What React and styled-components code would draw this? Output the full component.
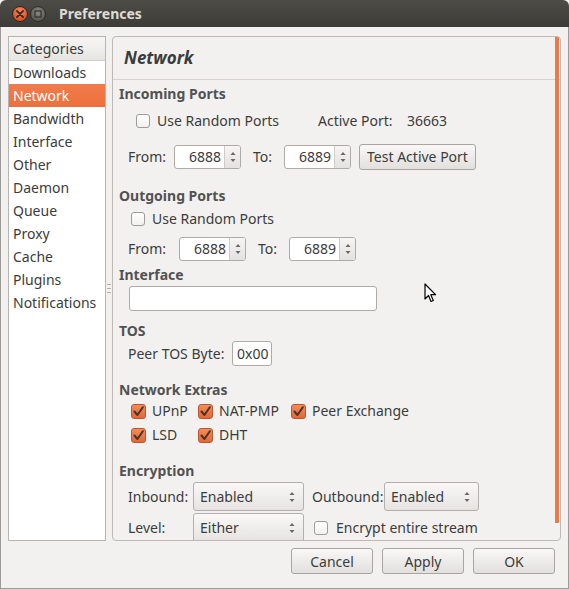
import React from 'react';
import styled, { createGlobalStyle } from 'styled-components';

const Global = createGlobalStyle`
  html, body { margin: 0; padding: 0; background: #f2f1f0; }
  body {
    font-family: "Noto Sans", "DejaVu Sans", sans-serif;
    font-size: 14px;
    color: #3c3c3c;
  }
  * { box-sizing: border-box; }
`;

const Window = styled.div`
  position: relative;
  width: 569px;
  height: 589px;
  display: flex;
  flex-direction: column;
  background: #f2f1f0;
  overflow: hidden;
`;

const TitleBar = styled.div`
  height: 27px;
  flex: none;
  display: flex;
  align-items: center;
  padding-left: 12px;
  background: linear-gradient(#4d4c47, #3c3b37);
  border-radius: 6px 6px 0 0;
`;

const WinButton = styled.span`
  width: 16px;
  height: 16px;
  border-radius: 50%;
  margin-right: ${p => p.$mr}px;
  display: flex;
  align-items: center;
  justify-content: center;
  border: 1px solid #2d2c29;
  background: ${p => (p.$close
    ? 'radial-gradient(circle at 50% 35%, #f8916a, #e3501e 70%)'
    : 'radial-gradient(circle at 50% 35%, #8d8b86, #5e5c57 70%)')};
`;

const Title = styled.span`
  font-weight: bold;
  font-size: 14px;
  color: #dfdbd2;
  line-height: 27px;
`;

const Frame = styled.div`
  flex: 1;
  display: flex;
  flex-direction: column;
  border: 1px solid #9d9b97;
  border-top: none;
`;

const Main = styled.div`
  display: flex;
  padding: 9px 7px 0 7px;
`;

const Sidebar = styled.div`
  width: 98px;
  height: 505px;
  flex: none;
  background: #ffffff;
  border: 1px solid #b7b4af;
  display: flex;
  flex-direction: column;
`;

const SideHeader = styled.div`
  height: 24px;
  line-height: 23px;
  padding-left: 4px;
  background: linear-gradient(#f7f6f5, #e7e5e2);
  border-bottom: 1px solid #d3d0cb;
  color: #3c3c3c;
`;

const SideItem = styled.div`
  height: 23px;
  line-height: 23px;
  padding-left: 4px;
  color: ${p => (p.$active ? '#ffffff' : '#3c3c3c')};
  background: ${p => (p.$active ? 'linear-gradient(#f27b4b, #ec703e)' : 'transparent')};
`;

const Handle = styled.div`
  width: 6px;
  flex: none;
  display: flex;
  align-items: center;
  justify-content: center;
`;

const Grip = styled.div`
  width: 4px;
  height: 9px;
  background: repeating-linear-gradient(to bottom, #b3b0ab 0 1px, transparent 1px 4px);
`;

const Panel = styled.div`
  position: relative;
  width: 449px;
  height: 505px;
  flex: none;
  border: 1px solid #bdbab5;
  border-radius: 4px;
  overflow: hidden;
  display: flex;
  flex-direction: column;
`;

const PanelHeader = styled.div`
  height: 43px;
  flex: none;
  display: flex;
  align-items: center;
  padding-left: 11px;
  padding-bottom: 1px;
  border-bottom: 1px solid #d6d3ce;
  font-size: 17px;
  font-weight: bold;
  font-style: italic;
  color: #3c3c3c;
`;

const Content = styled.div`
  flex: 1;
  overflow: hidden;
  padding-left: 6px;
  display: flex;
  flex-direction: column;
  line-height: 20px;
`;

const Heading = styled.div`
  height: 20px;
  line-height: 22px;
  flex: none;
  margin-top: ${p => p.$mt}px;
  font-weight: bold;
  color: #525252;
`;

const Row = styled.div`
  display: flex;
  align-items: center;
  flex: none;
  height: ${p => p.$h}px;
  margin-top: ${p => p.$mt}px;
  padding-left: ${p => p.$pl}px;
`;

const Cell = styled.span`
  display: inline-flex;
  align-items: center;
  flex: none;
  width: ${p => (p.$w ? `${p.$w}px` : 'auto')};
  margin-left: ${p => p.$ml || 0}px;
  white-space: nowrap;
`;

const Box = styled.span`
  width: ${p => (p.$on ? 15 : 14)}px;
  height: ${p => (p.$on ? 15 : 14)}px;
  flex: none;
  border-radius: 3px;
  margin-right: ${p => p.$gap}px;
  display: flex;
  align-items: center;
  justify-content: center;
  border: 1px solid ${p => (p.$on ? '#b8562d' : '#9f9c97')};
  background: ${p => (p.$on
    ? 'linear-gradient(#f58b58, #e2683a)'
    : 'linear-gradient(#ffffff, #f1f0ef)')};
`;

const SpinWrap = styled.span`
  display: inline-flex;
  flex: none;
  width: 67px;
  height: 24px;
  border: 1px solid #aeaba6;
  border-radius: 3px;
  background: #ffffff;
  overflow: hidden;
`;

const SpinValue = styled.span`
  flex: 1;
  text-align: right;
  padding-right: 3px;
  line-height: 22px;
  color: #3c3c3c;
`;

const SpinArrows = styled.span`
  width: 16px;
  flex: none;
  border-left: 1px solid #cfccc7;
  background: linear-gradient(#f6f5f4, #e4e2df);
  display: flex;
  align-items: center;
  justify-content: center;
`;

const Entry = styled.span`
  display: inline-flex;
  align-items: center;
  flex: none;
  width: ${p => p.$w}px;
  height: 25px;
  padding-left: 4px;
  background: #ffffff;
  border: 1px solid #aeaba6;
  border-radius: 3px;
  color: #3c3c3c;
`;

const Button = styled.span`
  display: inline-flex;
  align-items: center;
  justify-content: center;
  flex: none;
  width: ${p => p.$w}px;
  height: 26px;
  margin-left: ${p => p.$ml || 0}px;
  border: 1px solid #a9a6a1;
  border-radius: 3px;
  background: linear-gradient(#f9f8f7, #e2e0dd);
  color: #3c3c3c;
  white-space: nowrap;
`;

const Combo = styled.span`
  display: inline-flex;
  align-items: center;
  justify-content: space-between;
  flex: none;
  width: ${p => p.$w}px;
  height: 29px;
  padding: 0 8px 0 6px;
  border: 1px solid #b3b0ab;
  border-radius: 3px;
  background: linear-gradient(#f9f8f7, #e6e4e1);
  color: #3c3c3c;
`;

const Scrollbar = styled.div`
  position: absolute;
  top: 0;
  right: 1px;
  width: 4px;
  height: 486px;
  background: #f07746;
`;

const ButtonRow = styled.div`
  display: flex;
  justify-content: flex-end;
  gap: 9px;
  margin-top: 7px;
  padding-right: 13px;
`;

const Cursor = styled.svg`
  position: absolute;
  left: 424px;
  top: 283px;
`;

const UpDown = () => (
  <svg width="6" height="12" viewBox="0 0 6 12">
    <path d="M3 1 L5.5 4 L0.5 4 Z" fill="#6a6864" />
    <path d="M3 11 L5.5 8 L0.5 8 Z" fill="#6a6864" />
  </svg>
);

const Check = ({ on, gap = 7, children }) => (
  <>
    <Box $on={on} $gap={gap}>
      {on && (
        <svg width="11" height="11" viewBox="0 0 11 11">
          <path d="M1.5 5.5 L4.5 9 L9.8 1.2" fill="none" stroke="#4a3328" strokeWidth="2" strokeLinecap="round" strokeLinejoin="round" />
        </svg>
      )}
    </Box>
    {children}
  </>
);

const Spin = ({ value }) => (
  <SpinWrap>
    <SpinValue>{value}</SpinValue>
    <SpinArrows><UpDown /></SpinArrows>
  </SpinWrap>
);

const categories = ['Downloads', 'Network', 'Bandwidth', 'Interface', 'Other', 'Daemon', 'Queue', 'Proxy', 'Cache', 'Plugins', 'Notifications'];

export default function App() {
  return (
    <>
      <Global />
      <Window>
        <TitleBar>
          <WinButton $close $mr={2}>
            <svg width="8" height="8" viewBox="0 0 8 8">
              <path d="M1 1 L7 7 M7 1 L1 7" stroke="#3a2a22" strokeWidth="1.8" strokeLinecap="round" />
            </svg>
          </WinButton>
          <WinButton $mr={13}>
            <svg width="8" height="8" viewBox="0 0 8 8">
              <rect x="1" y="1" width="6" height="6" fill="none" stroke="#3a3936" strokeWidth="1.4" />
            </svg>
          </WinButton>
          <Title>Preferences</Title>
        </TitleBar>
        <Frame>
          <Main>
            <Sidebar>
              <SideHeader>Categories</SideHeader>
              {categories.map(c => (
                <SideItem key={c} $active={c === 'Network'}>{c}</SideItem>
              ))}
            </Sidebar>
            <Handle><Grip /></Handle>
            <Panel>
              <PanelHeader>Network</PanelHeader>
              <Content>
                <Heading $mt={3}>Incoming Ports</Heading>
                <Row $h={22} $mt={7} $pl={17}>
                  <Check gap={7}><Cell $w={161}>Use Random Ports</Cell></Check>
                  <Cell $w={89}>Active Port:</Cell>
                  <Cell>36663</Cell>
                </Row>
                <Row $h={26} $mt={12} $pl={9}>
                  <Cell $w={46}>From:</Cell>
                  <Spin value="6888" />
                  <Cell $ml={12} $w={31}>To:</Cell>
                  <Spin value="6889" />
                  <Button $w={117} $ml={8}>Test Active Port</Button>
                </Row>
                <Heading $mt={15}>Outgoing Ports</Heading>
                <Row $h={22} $mt={3} $pl={12}>
                  <Check gap={7}><Cell>Use Random Ports</Cell></Check>
                </Row>
                <Row $h={26} $mt={6} $pl={9}>
                  <Cell $w={51}>From:</Cell>
                  <Spin value="6888" />
                  <Cell $ml={12} $w={31}>To:</Cell>
                  <Spin value="6889" />
                </Row>
                <Heading $mt={2}>Interface</Heading>
                <Row $h={25} $mt={2} $pl={10}>
                  <Entry $w={248} />
                </Row>
                <Heading $mt={9}>TOS</Heading>
                <Row $h={25} $mt={1} $pl={9}>
                  <Cell $w={104}>Peer TOS Byte:</Cell>
                  <Entry $w={40}>0x00</Entry>
                </Row>
                <Heading $mt={13}>Network Extras</Heading>
                <Row $h={22} $mt={1} $pl={12}>
                  <Check on gap={6}><Cell $w={46}>UPnP</Cell></Check>
                  <Check on gap={6}><Cell $w={72}>NAT-PMP</Cell></Check>
                  <Check on gap={6}><Cell>Peer Exchange</Cell></Check>
                </Row>
                <Row $h={22} $mt={2} $pl={12}>
                  <Check on gap={6}><Cell $w={46}>LSD</Cell></Check>
                  <Check on gap={6}><Cell>DHT</Cell></Check>
                </Row>
                <Heading $mt={14}>Encryption</Heading>
                <Row $h={29} $mt={2} $pl={9}>
                  <Cell $w={65}>Inbound:</Cell>
                  <Combo $w={111}>Enabled<UpDown /></Combo>
                  <Cell $ml={8} $w={72}>Outbound:</Cell>
                  <Combo $w={95}>Enabled<UpDown /></Combo>
                </Row>
                <Row $h={29} $mt={2} $pl={9}>
                  <Cell $w={65}>Level:</Cell>
                  <Combo $w={111}>Either<UpDown /></Combo>
                  <Cell $ml={10}>
                    <Check gap={8}>Encrypt entire stream</Check>
                  </Cell>
                </Row>
              </Content>
              <Scrollbar />
            </Panel>
          </Main>
          <ButtonRow>
            <Button $w={82}>Cancel</Button>
            <Button $w={82}>Apply</Button>
            <Button $w={82}>OK</Button>
          </ButtonRow>
        </Frame>
        <Cursor width="13" height="20" viewBox="0 0 13 20">
          <path d="M1 1 L1 16 L4.5 12.5 L7 18.5 L9.3 17.5 L6.8 11.7 L11.5 11.7 Z" fill="#ffffff" stroke="#000000" strokeWidth="1.2" strokeLinejoin="round" />
        </Cursor>
      </Window>
    </>
  );
}
